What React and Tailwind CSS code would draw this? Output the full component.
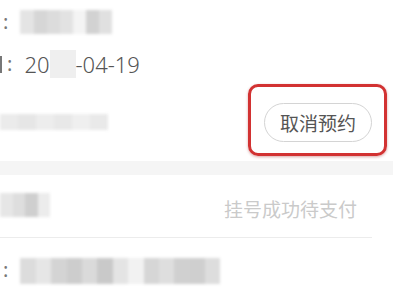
import React from 'react';

const Blur = ({ cells, className }) => (
  <div className={`flex blur-[1.5px] ${className}`}>
    {cells.map((c, i) => (
      <div key={i} className={`flex-1 ${c}`} />
    ))}
  </div>
);

export default function App() {
  return (
    <div className="w-[400px] h-[300px] overflow-hidden bg-white font-['Noto_Sans','Noto_Sans_CJK_SC',sans-serif] text-[#555]">
      <div className="h-[44px] flex items-center">
        <span className="ml-[3px] text-[20px] text-[#777] leading-none">:</span>
        <Blur
          className="ml-[12px] w-[92px] h-[24px]"
          cells={['bg-[#e4e4e4]', 'bg-[#d6d6d6]', 'bg-[#dcdcdc]', 'bg-[#e2e2e2]', 'bg-[#f4f4f4]', 'bg-[#d2d2d2]', 'bg-[#e0e0e0]']}
        />
      </div>
      <div className="h-[40px] flex items-center">
        <span className="w-[2px] h-[17px] bg-[#777]" />
        <span className="ml-[5px] text-[20px] text-[#777] leading-none">:</span>
        <span className="ml-[12px] text-[22px] font-light leading-none">20</span>
        <span className="w-[26px] h-[28px] bg-[#efefef]" />
        <span className="text-[22px] font-light leading-none">-04-19</span>
      </div>
      <div className="h-[77px] flex items-center justify-between">
        <Blur
          className="w-[108px] h-[16px] -mt-[2px]"
          cells={['bg-[#ebebeb]', 'bg-[#e6e6e6]', 'bg-[#ededed]', 'bg-[#e8e8e8]', 'bg-[#efefef]', 'bg-[#e9e9e9]']}
        />
        <div className="relative mr-[28px]">
          <button className="w-[108px] h-[39px] rounded-full border border-[#d4d4d4] bg-white text-[19px] text-[#555] leading-none font-['Noto_Sans_CJK_SC',sans-serif]">
            取消预约
          </button>
          <div className="absolute -left-[16px] -top-[19px] -right-[15px] -bottom-[14px] rounded-[10px] border-[3px] border-[#d23232] shadow-[0_1px_3px_rgba(150,0,0,0.35)]" />
        </div>
      </div>
      <div className="h-[14px] w-[393px] bg-[#f5f5f5]" />
      <div className="h-[62px] flex items-center justify-between">
        <Blur
          className="w-[50px] h-[24px] -mt-[2px]"
          cells={['bg-[#e6e6e6]', 'bg-[#dedede]', 'bg-[#cfcfcf]', 'bg-[#ececec]']}
        />
        <span className="mr-[43px] mt-[4px] text-[19px] text-[#cacaca] leading-none font-['Noto_Sans_CJK_SC',sans-serif]">挂号成功待支付</span>
      </div>
      <div className="h-px w-[372px] bg-[#ececec]" />
      <div className="h-[60px] flex items-center">
        <span className="ml-[3px] mt-[4px] text-[20px] text-[#777] leading-none">:</span>
        <Blur
          className="ml-[12px] w-[200px] h-[26px] mt-[6px]"
          cells={['bg-[#dcdcdc]', 'bg-[#e6e6e6]', 'bg-[#d4d4d4]', 'bg-[#cdcdcd]', 'bg-[#dadada]', 'bg-[#c9c9c9]', 'bg-[#e4e4e4]', 'bg-[#f2f2f2]', 'bg-[#d6d6d6]', 'bg-[#dedede]', 'bg-[#d0d0d0]', 'bg-[#cfcfcf]', 'bg-[#dddddd]']}
        />
      </div>
    </div>
  );
}
